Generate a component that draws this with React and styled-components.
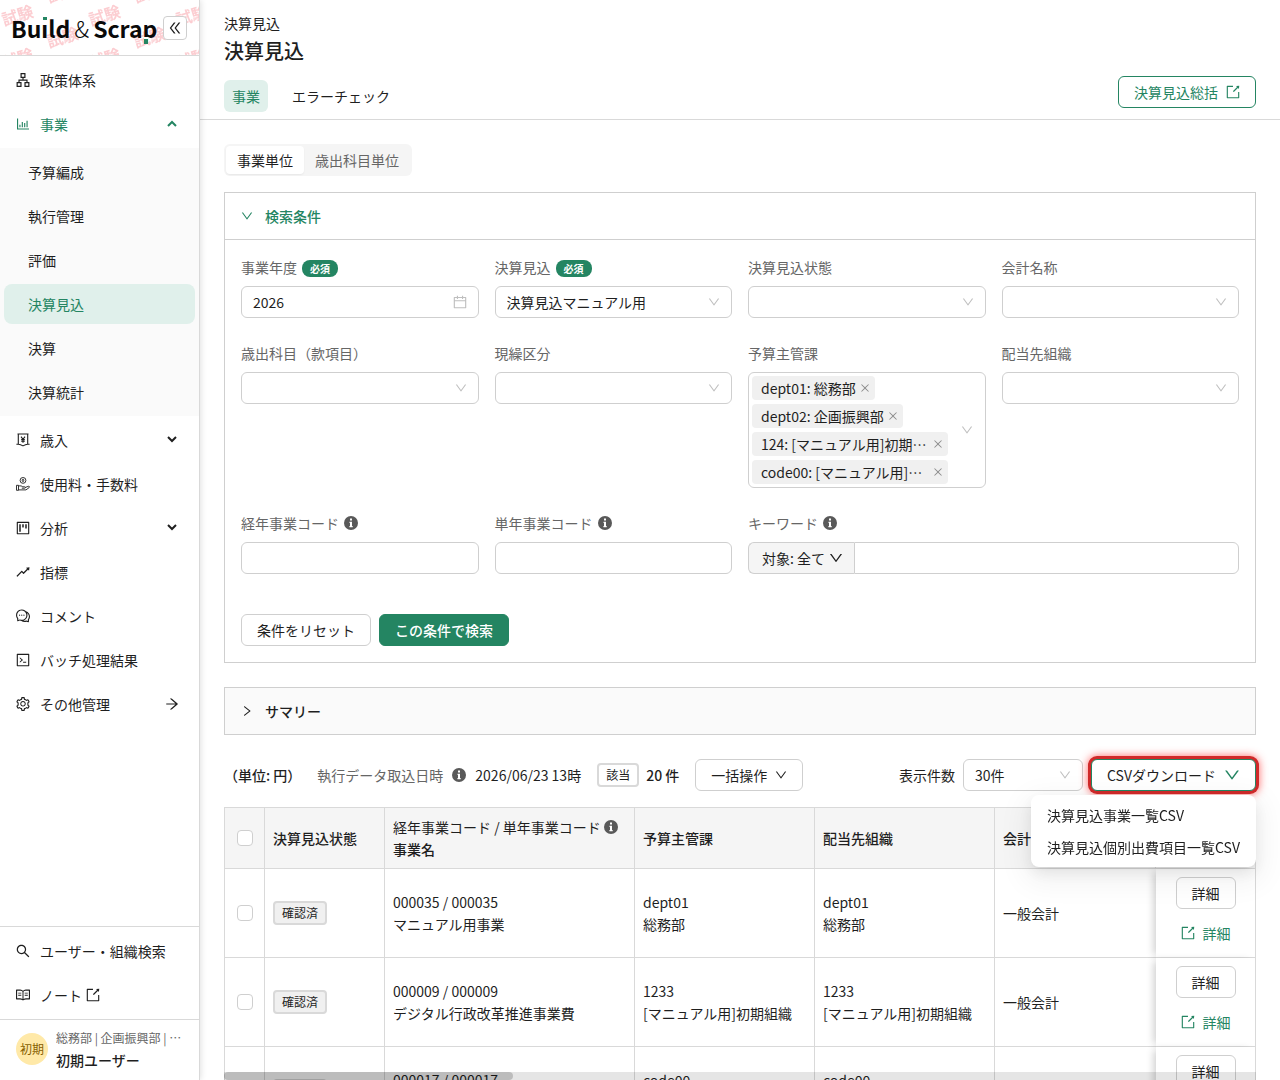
import { createGlobalStyle, css, styled } from "styled-components";
import {
  AiOutlineApartment,
  AiOutlineArrowRight,
  AiOutlineBarChart,
  AiOutlineCalendar,
  AiOutlineClose,
  AiOutlineCode,
  AiOutlineComment,
  AiOutlineDoubleLeft,
  AiOutlineDown,
  AiOutlineExport,
  AiOutlineProject,
  AiOutlineRead,
  AiOutlineRight,
  AiOutlineRise,
  AiOutlineSearch,
  AiOutlineSetting,
} from "react-icons/ai";

const GlobalStyle = createGlobalStyle`
  * {
    box-sizing: border-box;
  }

  body {
    margin: 0;
    color: #1f1f1f;
    background: #fff;
    font-family: "Noto Sans CJK JP", "Noto Sans", sans-serif;
    font-size: 14px;
    line-height: 22px;
  }

  button, input, select {
    font: inherit;
    color: inherit;
  }

  svg {
    flex: none;
  }
`;

const green = "#248562";
const paleGreen = "#e0f0eb";
const line = "#cfcfcf";

const subMenu = ["予算編成", "執行管理", "評価", "決算見込", "決算", "決算統計"];

const sections = [
  "dept01: 総務部",
  "dept02: 企画振興部",
  "124: [マニュアル用]初期組織",
  "code00: [マニュアル用]組織",
];

const rows = [
  { code: "000035 / 000035", name: "マニュアル用事業", dept: "dept01", deptName: "総務部" },
  { code: "000009 / 000009", name: "デジタル行政改革推進事業費", dept: "1233", deptName: "[マニュアル用]初期組織" },
  { code: "000017 / 000017", name: "広報事業", dept: "code00", deptName: "[マニュアル用]組織" },
];

// the ai icons keep a 64 unit margin in their view box, trim it
const Icon = ({ as: Glyph, size = 14, color }) => (
  <Glyph viewBox="64 64 896 896" size={size} color={color} />
);

const InfoIcon = () => (
  <svg width="14" height="14" viewBox="0 0 14 14">
    <circle cx="7" cy="7" r="7" fill="#595959" />
    <path d="M6 2.5h2v2H6zM5.5 5.7H8v4.3h.7v1.2H5.4V10H6V6.9h-.5z" fill="#fff" />
  </svg>
);

const YenIcon = () => (
  <svg width="14" height="14" viewBox="0 0 14 14" fill="none" stroke="currentColor" strokeWidth="1.1">
    <path d="M1.5 1h11M2.3 1v10.3Q4.5 11.3 7 12.9Q9.5 11.3 11.7 11.3V1M.4 11.3h1.9M11.7 11.3h1.9" />
    <path d="M5 3.6l2 2.7 2-2.7M7 6.3v3.5M5.2 6.6h3.6M5.2 8.2h3.6" />
  </svg>
);

const HandCoinIcon = () => (
  <svg width="14" height="14" viewBox="0 0 14 14" fill="none" stroke="currentColor" strokeWidth="0.9">
    <circle cx="7" cy="3.4" r="2.9" />
    <ellipse cx="7" cy="3.4" rx="0.8" ry="1.2" />
    <path d="M.5 8.3h2v5h-2zM2.5 8.9h2.6l1.7.9h1.9c1 0 1 1.4 0 1.4H5.8M9.4 10.4l2.9-1.1c1.1-.3 1.7.7.8 1.3L10 12.9H2.5" />
  </svg>
);

const Caret = ({ up }) => (
  <svg width="10" height="10" viewBox="0 0 10 10" fill="none" stroke="currentColor" strokeWidth="2">
    <path d={up ? "M1 7l4-4 4 4" : "M1 2l4 4 4-4"} />
  </svg>
);

const Watermark = () => (
  <WatermarkSvg aria-hidden="true">
    <defs>
      <pattern id="mark" width="87" height="87" patternUnits="userSpaceOnUse">
        <g fill="#fccdd1" fontSize="16" fontWeight="700">
          <text x="4" y="26" transform="rotate(-17 4 26)">試験</text>
          <text x="49" y="48" transform="rotate(-17 49 48)">試験</text>
          <text x="4" y="69" transform="rotate(-17 4 69)">試験</text>
          <text x="49" y="3" transform="rotate(-17 49 3)">試験</text>
        </g>
      </pattern>
    </defs>
    <rect width="100%" height="100%" fill="url(#mark)" />
  </WatermarkSvg>
);

const Select = ({ id, value = "" }) => (
  <Control>
    <SelectBox id={id} defaultValue={value}>
      <option>{value}</option>
    </SelectBox>
    <ControlIcon>
      <Icon as={AiOutlineDown} size={12} />
    </ControlIcon>
  </Control>
);

const Field = ({ id, label, required, info, wide, children }) => (
  <FieldBox $wide={wide}>
    <Label id={`${id}Label`} htmlFor={id}>
      {label}
      {required && <Required>必須</Required>}
      {info && <InfoIcon />}
    </Label>
    {children}
  </FieldBox>
);

const MenuItem = ({ icon, label, end, active }) => (
  <MenuLink href="#" $active={active}>
    <Icon as={icon} />
    <span>{label}</span>
    {end && <MenuEnd>{end}</MenuEnd>}
  </MenuLink>
);

const Sidebar = () => (
  <Side>
    <Brand>
      <Watermark />
      <Logo>
        Bu<Dotted>ı</Dotted>ld<Amp>&amp;</Amp>Scra<Tail>p</Tail>
      </Logo>
      <Collapse aria-label="メニューを閉じる">
        <Icon as={AiOutlineDoubleLeft} />
      </Collapse>
    </Brand>
    <Menu>
      <MenuItem icon={AiOutlineApartment} label="政策体系" />
      <MenuItem icon={AiOutlineBarChart} label="事業" active end={<Caret up />} />
      <SubMenu>
        {subMenu.map((item) => (
          <SubLink href="#" key={item} $active={item === "決算見込"}>
            {item}
          </SubLink>
        ))}
      </SubMenu>
      <MenuItem icon={YenIcon} label="歳入" end={<Caret />} />
      <MenuItem icon={HandCoinIcon} label="使用料・手数料" />
      <MenuItem icon={AiOutlineProject} label="分析" end={<Caret />} />
      <MenuItem icon={AiOutlineRise} label="指標" />
      <MenuItem icon={AiOutlineComment} label="コメント" />
      <MenuItem icon={AiOutlineCode} label="バッチ処理結果" />
      <MenuItem icon={AiOutlineSetting} label="その他管理" end={<Icon as={AiOutlineArrowRight} />} />
    </Menu>
    <SideBottom>
      <MenuItem icon={AiOutlineSearch} label="ユーザー・組織検索" />
      <MenuLink href="#">
        <Icon as={AiOutlineRead} />
        <NoteLabel>
          ノート
          <Icon as={AiOutlineExport} />
        </NoteLabel>
      </MenuLink>
    </SideBottom>
    <User>
      <Avatar>初期</Avatar>
      <UserText>
        <UserDept>総務部 | 企画振興部 | 初期組織</UserDept>
        <UserName>初期ユーザー</UserName>
      </UserText>
    </User>
  </Side>
);

const SearchPanel = () => (
  <Panel>
    <PanelHead $open>
      <Icon as={AiOutlineDown} size={12} />
      検索条件
    </PanelHead>
    <PanelBody>
      <Fields>
        <Field id="year" label="事業年度" required>
          <Control>
            <Input id="year" defaultValue="2026" />
            <ControlIcon>
              <Icon as={AiOutlineCalendar} />
            </ControlIcon>
          </Control>
        </Field>
        <Field id="forecast" label="決算見込" required>
          <Select id="forecast" value="決算見込マニュアル用" />
        </Field>
        <Field id="status" label="決算見込状態">
          <Select id="status" />
        </Field>
        <Field id="account" label="会計名称">
          <Select id="account" />
        </Field>
        <Field id="subject" label="歳出科目（款項目）">
          <Select id="subject" />
        </Field>
        <Field id="kind" label="現繰区分">
          <Select id="kind" />
        </Field>
        <Field id="section" label="予算主管課">
          <TagBox id="section" role="group" aria-labelledby="sectionLabel">
            <Tags>
              {sections.map((tag) => (
                <Tag key={tag}>
                  <TagText>{tag}</TagText>
                  <TagClose aria-label="削除">
                    <Icon as={AiOutlineClose} size={10} />
                  </TagClose>
                </Tag>
              ))}
            </Tags>
            <ControlIcon>
              <Icon as={AiOutlineDown} size={12} />
            </ControlIcon>
          </TagBox>
        </Field>
        <Field id="org" label="配当先組織">
          <Select id="org" />
        </Field>
        <Field id="longCode" label="経年事業コード" info>
          <Input id="longCode" />
        </Field>
        <Field id="yearCode" label="単年事業コード" info>
          <Input id="yearCode" />
        </Field>
        <Field id="keyword" label="キーワード" info wide>
          <KeywordRow>
            <Target>
              対象: 全て
              <Icon as={AiOutlineDown} />
            </Target>
            <KeywordInput id="keyword" />
          </KeywordRow>
        </Field>
      </Fields>
      <Actions>
        <Button>条件をリセット</Button>
        <Button $primary>この条件で検索</Button>
      </Actions>
    </PanelBody>
  </Panel>
);

const Toolbar = () => (
  <Tools>
    <Unit>（単位: 円）</Unit>
    <Imported>
      <Muted>執行データ取込日時</Muted>
      <InfoIcon />
      2026/06/23 13時
    </Imported>
    <Count>
      <Badge>該当</Badge>
      20 件
    </Count>
    <Button>
      一括操作
      <Icon as={AiOutlineDown} size={12} />
    </Button>
    <ToolsEnd>
      <label htmlFor="pageSize">表示件数</label>
      <PageSize>
        <Select id="pageSize" value="30件" />
      </PageSize>
      <Download>
        <DownloadButton>
          CSVダウンロード
          <Icon as={AiOutlineDown} size={16} color={green} />
        </DownloadButton>
        <DropMenu>
          <DropItem>決算見込事業一覧CSV</DropItem>
          <DropItem>決算見込個別出費項目一覧CSV</DropItem>
        </DropMenu>
      </Download>
    </ToolsEnd>
  </Tools>
);

const ResultTable = () => (
  <div>
    <Table>
      <colgroup>
        <col width="40" />
        <col width="120" />
        <col width="250" />
        <col width="180" />
        <col width="180" />
        <col />
        <col width="100" />
      </colgroup>
      <thead>
        <tr>
          <Th>
            <Checkbox type="checkbox" aria-label="すべて選択" />
          </Th>
          <Th>決算見込状態</Th>
          <Th>
            <CodeHead>
              経年事業コード / 単年事業コード
              <InfoIcon />
            </CodeHead>
            事業名
          </Th>
          <Th>予算主管課</Th>
          <Th>配当先組織</Th>
          <Th>会計名称</Th>
          <Th />
        </tr>
      </thead>
      <tbody>
        {rows.map((row) => (
          <tr key={row.code}>
            <Td>
              <Checkbox type="checkbox" aria-label={row.name} />
            </Td>
            <Td>
              <Badge $filled>確認済</Badge>
            </Td>
            <Td>
              {row.code}
              <br />
              {row.name}
            </Td>
            <Td>
              {row.dept}
              <br />
              {row.deptName}
            </Td>
            <Td>
              {row.dept}
              <br />
              {row.deptName}
            </Td>
            <Td $last>一般会計</Td>
            <FixedTd>
              <Detail>
                <Button>詳細</Button>
                <DetailLink href="#">
                  <Icon as={AiOutlineExport} />
                  詳細
                </DetailLink>
              </Detail>
            </FixedTd>
          </tr>
        ))}
      </tbody>
    </Table>
    <ScrollTrack>
      <ScrollThumb />
    </ScrollTrack>
  </div>
);

export default function App() {
  return (
    <Page>
      <GlobalStyle />
      <Sidebar />
      <Main>
        <Header>
          <div>
            <div>決算見込</div>
            <Title>決算見込</Title>
            <Tabs>
              <Tab $active>事業</Tab>
              <Tab>エラーチェック</Tab>
            </Tabs>
          </div>
          <Button $outline>
            決算見込総括
            <Icon as={AiOutlineExport} />
          </Button>
        </Header>
        <Content>
          <Segmented>
            <Segment $active>事業単位</Segment>
            <Segment>歳出科目単位</Segment>
          </Segmented>
          <SearchPanel />
          <Panel>
            <PanelHead>
              <Icon as={AiOutlineRight} size={12} />
              サマリー
            </PanelHead>
          </Panel>
          <Toolbar />
          <ResultTable />
        </Content>
      </Main>
    </Page>
  );
}

const Page = styled.div`
  display: flex;
  height: 100vh;
  overflow: hidden;
`;

const Side = styled.aside`
  display: flex;
  flex-direction: column;
  flex: none;
  width: 200px;
  border-right: 1px solid #d9d9d9;
  box-shadow: 1px 0 6px rgba(0, 0, 0, 0.12);
  z-index: 1;
`;

const Brand = styled.div`
  display: flex;
  align-items: center;
  justify-content: space-between;
  height: 56px;
  padding: 0 12px 0 11px;
  border-bottom: 1px solid #d9d9d9;
  position: relative;
  overflow: hidden;
`;

const WatermarkSvg = styled.svg`
  position: absolute;
  inset: 0;
  width: 100%;
  height: 100%;
`;

const Logo = styled.div`
  display: flex;
  color: #0a0a0a;
  font-size: 23px;
  font-weight: 700;
  line-height: 32px;
  position: relative;
`;

const Amp = styled.span`
  margin: 0 4px;
  font-weight: 300;
`;

const Dotted = styled.span`
  position: relative;

  &::before {
    content: "";
    position: absolute;
    top: 5px;
    left: 2px;
    width: 4px;
    height: 3px;
    background: ${green};
  }
`;

const Tail = styled.span`
  position: relative;

  &::after {
    content: "";
    position: absolute;
    bottom: 0;
    left: 1px;
    width: 4px;
    height: 5px;
    border-top: 2px solid #fff;
    background: ${green};
  }
`;

const Collapse = styled.button`
  display: flex;
  align-items: center;
  justify-content: center;
  width: 24px;
  height: 24px;
  padding: 0;
  border: 1px solid ${line};
  border-radius: 4px;
  background: #fff;
  position: relative;
`;

const Menu = styled.nav`
  display: flex;
  flex: 1;
  flex-direction: column;
  gap: 4px;
  padding: 4px 0;
`;

const MenuLink = styled.a`
  display: flex;
  align-items: center;
  gap: 10px;
  height: 40px;
  padding: 0 20px 0 16px;
  color: ${(props) => (props.$active ? green : "inherit")};
  text-decoration: none;
  white-space: nowrap;
`;

const MenuEnd = styled.span`
  display: flex;
  justify-content: center;
  width: 14px;
  margin-left: auto;
`;

const SubMenu = styled.div`
  display: flex;
  flex-direction: column;
  gap: 4px;
  padding: 4px;
  background: #fafafa;
`;

const SubLink = styled.a`
  display: flex;
  align-items: center;
  height: 40px;
  padding: 0 24px;
  border-radius: 8px;
  color: ${(props) => (props.$active ? green : "inherit")};
  background: ${(props) => (props.$active ? paleGreen : "transparent")};
  text-decoration: none;
`;

const SideBottom = styled.div`
  display: flex;
  flex-direction: column;
  gap: 4px;
  padding: 4px 0;
  border-top: 1px solid #d9d9d9;
`;

const NoteLabel = styled.span`
  display: flex;
  align-items: center;
  gap: 4px;
`;

const User = styled.div`
  display: flex;
  align-items: center;
  gap: 8px;
  height: 61px;
  padding: 0 16px 2px;
  border-top: 1px solid #d9d9d9;
`;

const Avatar = styled.div`
  flex: none;
  width: 32px;
  height: 32px;
  border-radius: 50%;
  color: #875f00;
  background: #ffe9a8;
  font-size: 12px;
  line-height: 32px;
  text-align: center;
`;

const UserText = styled.div`
  min-width: 0;
`;

const UserDept = styled.div`
  overflow: hidden;
  color: #666;
  font-size: 12px;
  text-overflow: ellipsis;
  white-space: nowrap;
`;

const UserName = styled.div`
  font-weight: 500;
`;

const Main = styled.main`
  flex: 1;
  min-width: 0;
  overflow: hidden;
`;

const Header = styled.header`
  display: flex;
  align-items: flex-end;
  justify-content: space-between;
  padding: 12px 24px 7px;
  border-bottom: 1px solid #d9d9d9;

  > button {
    margin-bottom: 4px;
  }
`;

const Title = styled.h1`
  margin: 0;
  font-size: 20px;
  font-weight: 500;
  line-height: 34px;
`;

const Tabs = styled.div`
  display: flex;
  gap: 16px;
  margin-top: 12px;
`;

const Tab = styled.button`
  height: 32px;
  padding: 0 8px;
  border: 0;
  border-radius: 6px;
  color: ${(props) => (props.$active ? green : "inherit")};
  background: ${(props) => (props.$active ? paleGreen : "transparent")};
`;

const Content = styled.div`
  padding: 24px 24px 0;
`;

const Segmented = styled.div`
  display: inline-flex;
  padding: 2px;
  border-radius: 6px;
  background: #f5f5f5;
  margin-bottom: 16px;
  vertical-align: top;
`;

const Segment = styled.button`
  height: 28px;
  padding: 0 11px;
  border: 0;
  border-radius: 4px;
  color: ${(props) => (props.$active ? "inherit" : "#666")};
  background: ${(props) => (props.$active ? "#fff" : "transparent")};
  box-shadow: ${(props) => (props.$active ? "0 1px 2px rgba(0, 0, 0, 0.06)" : "none")};
`;

const Panel = styled.section`
  margin-bottom: 24px;
  border: 1px solid ${line};
`;

const PanelHead = styled.button`
  display: flex;
  align-items: center;
  gap: 12px;
  width: 100%;
  height: 46px;
  padding: 0 16px;
  border: 0;
  color: ${(props) => (props.$open ? green : "inherit")};
  background: ${(props) => (props.$open ? "#fff" : "#fafafa")};
  font-weight: 500;
`;

const PanelBody = styled.div`
  padding: 16px;
  border-top: 1px solid ${line};
`;

const Fields = styled.div`
  display: grid;
  grid-template-columns: repeat(4, 1fr);
  gap: 24px 16px;
`;

const FieldBox = styled.div`
  min-width: 0;
  grid-column: ${(props) => (props.$wide ? "span 2" : "auto")};
`;

const Label = styled.label`
  display: flex;
  align-items: center;
  gap: 5px;
  height: 22px;
  margin-bottom: 8px;
  color: #666;
`;

const Required = styled.span`
  margin-top: 2px;
  padding: 0 8px;
  border-radius: 8px;
  color: #fff;
  background: ${green};
  font-size: 10px;
  font-weight: 700;
  line-height: 17px;
`;

const box = css`
  width: 100%;
  height: 32px;
  border: 1px solid ${line};
  border-radius: 6px;
  background: #fff;
`;

const Control = styled.div`
  position: relative;
`;

const Input = styled.input`
  ${box}
  display: block;
  padding: 0 11px;
`;

const SelectBox = styled.select`
  ${box}
  display: block;
  padding: 0 11px;
  appearance: none;
`;

const ControlIcon = styled.span`
  display: flex;
  align-items: center;
  position: absolute;
  top: 0;
  right: 12px;
  bottom: 0;
  color: #bfbfbf;
  pointer-events: none;
`;

const TagBox = styled.div`
  ${box}
  height: auto;
  padding: 3px 37px 3px 3px;
  position: relative;
`;

const Tags = styled.div`
  display: flex;
  flex-direction: column;
  align-items: flex-start;
  gap: 4px;
`;

const Tag = styled.span`
  display: flex;
  align-items: center;
  gap: 4px;
  max-width: 100%;
  height: 24px;
  padding: 0 5px 0 9px;
  border-radius: 4px;
  background: #f0f0f0;
`;

const TagText = styled.span`
  overflow: hidden;
  text-overflow: ellipsis;
  white-space: nowrap;
`;

const TagClose = styled.button`
  display: flex;
  padding: 0;
  border: 0;
  color: #8c8c8c;
  background: none;
`;

const KeywordRow = styled.div`
  display: flex;
`;

const Target = styled.button`
  display: flex;
  align-items: center;
  flex: none;
  gap: 4px;
  height: 32px;
  padding: 0 11px 0 13px;
  border: 1px solid ${line};
  border-right: 0;
  border-radius: 6px 0 0 6px;
  background: #f5f5f5;
`;

const KeywordInput = styled(Input)`
  min-width: 0;
  border-radius: 0 6px 6px 0;
`;

const Actions = styled.div`
  display: flex;
  gap: 8px;
  margin-top: 40px;
`;

const Button = styled.button`
  display: inline-flex;
  align-items: center;
  justify-content: center;
  gap: 8px;
  height: 32px;
  padding: 0 15px;
  border: 1px solid ${(props) => (props.$primary || props.$outline ? green : line)};
  border-radius: 6px;
  color: ${(props) => (props.$primary ? "#fff" : props.$outline ? green : "inherit")};
  background: ${(props) => (props.$primary ? green : "#fff")};
  font-weight: ${(props) => (props.$primary ? 500 : 400)};
  white-space: nowrap;
`;

const Tools = styled.div`
  display: flex;
  align-items: center;
  gap: 16px;
  margin-bottom: 16px;
  white-space: nowrap;
`;

const Unit = styled.span`
  font-weight: 500;
`;

const Imported = styled.span`
  display: flex;
  align-items: center;
  gap: 9px;
`;

const Muted = styled.span`
  color: #666;
`;

const Count = styled.span`
  display: flex;
  align-items: center;
  gap: 7px;
  font-weight: 500;
`;

const Badge = styled.span`
  display: inline-block;
  padding: 0 7px;
  border: 2px solid #d9d9d9;
  border-radius: 4px;
  background: ${(props) => (props.$filled ? "#f0f0f0" : "#fff")};
  font-size: 12px;
  font-weight: 400;
  line-height: 20px;
`;

const ToolsEnd = styled.div`
  display: flex;
  align-items: center;
  gap: 8px;
  margin-left: auto;
`;

const PageSize = styled.div`
  width: 120px;
`;

const Download = styled.div`
  position: relative;
`;

const DownloadButton = styled(Button)`
  border-color: ${green};
  box-shadow: 0 0 0 3px #d02a2a, 0 0 8px 3px rgba(255, 40, 40, 0.7);
`;

const DropMenu = styled.div`
  position: absolute;
  top: 36px;
  right: 0;
  z-index: 3;
  padding: 4px;
  border-radius: 8px;
  background: #fff;
  box-shadow: 0 6px 16px rgba(0, 0, 0, 0.08), 0 3px 6px -4px rgba(0, 0, 0, 0.12), 0 9px 28px 8px rgba(0, 0, 0, 0.05);
`;

const DropItem = styled.button`
  display: block;
  width: 100%;
  padding: 5px 12px;
  border: 0;
  background: none;
  text-align: left;
`;

const Table = styled.table`
  width: 100%;
  border: 1px solid #d9d9d9;
  border-width: 1px 0 0 1px;
  border-collapse: separate;
  border-spacing: 0;
  table-layout: fixed;
`;

const Th = styled.th`
  padding: 8px;
  border: 1px solid #d9d9d9;
  border-width: 0 1px 1px 0;
  background: #f5f5f5;
  font-weight: 500;
  text-align: left;
  white-space: nowrap;
`;

const Td = styled.td`
  padding: 8px;
  border: 1px solid #d9d9d9;
  border-width: ${(props) => (props.$last ? "0 0 1px" : "0 1px 1px 0")};
`;

const FixedTd = styled(Td)`
  background: #fff;
  box-shadow: -5px 0 8px -3px rgba(0, 0, 0, 0.2);
`;

const CodeHead = styled.div`
  display: flex;
  align-items: center;
  gap: 3px;
  font-weight: 400;
`;

const Checkbox = styled.input`
  display: block;
  width: 16px;
  height: 16px;
  margin: 0 auto;
  border: 1px solid ${line};
  border-radius: 4px;
  background: #fff;
  appearance: none;
`;

const Detail = styled.div`
  display: flex;
  flex-direction: column;
  align-items: center;
  gap: 8px;
`;

const DetailLink = styled.a`
  display: flex;
  align-items: center;
  gap: 8px;
  height: 32px;
  color: ${green};
  text-decoration: none;
`;

const ScrollTrack = styled.div`
  position: sticky;
  bottom: 0;
  z-index: 2;
  height: 8px;
  background: rgba(0, 0, 0, 0.1);
`;

const ScrollThumb = styled.div`
  width: 28%;
  height: 8px;
  border-radius: 4px;
  background: rgba(0, 0, 0, 0.18);
`;
